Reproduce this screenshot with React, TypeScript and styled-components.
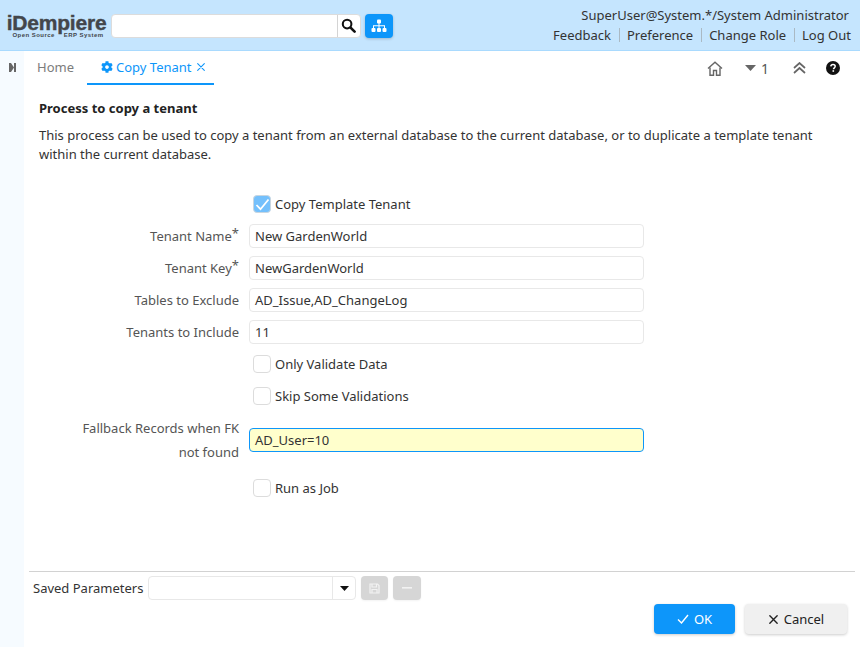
import React from "react";
import styled, { createGlobalStyle } from "styled-components";

const Global = createGlobalStyle`
  html, body { margin: 0; padding: 0; height: 100%; background: #fff; overflow: hidden; }
  body { font-family: "Noto Sans", sans-serif; font-size: 13px; color: #333; }
  #root { height: 647px; }
`;

const Page = styled.div`
  width: 860px; height: 647px; display: flex; flex-direction: column; overflow: hidden;
`;
const Header = styled.header`
  height: 50px; flex: none; background: #c5e5fe; border-bottom: 1px solid #a9dafe;
  display: flex; justify-content: space-between; padding: 0 9px 0 6px;
`;
const HeaderLeft = styled.div`
  display: flex; align-items: center; padding-top: 1px;
`;
const Logo = styled.div`
  width: 105px; padding-right: 4px; box-sizing: border-box; display: flex; flex-direction: column; align-items: center; color: #43464b;
`;
const LogoMain = styled.div`
  font: 900 21px/17px "Liberation Sans", sans-serif; letter-spacing: -0.2px; -webkit-text-stroke: 0.4px #43464b;
  white-space: nowrap;
`;
const LogoSub = styled.div`
  display: flex; gap: 9px; margin-top: 1px; padding-left: 3px;
  font: 700 6px/6px "Liberation Sans", sans-serif; letter-spacing: 0.45px; white-space: nowrap;
`;
const Search = styled.div`
  width: 250px; height: 24px; margin-right: 4px; background: #fff;
  border: 1px solid #dcdcdc; border-radius: 4px; box-sizing: border-box;
  display: flex; justify-content: flex-end; overflow: hidden;
`;
const SearchBtn = styled.div`
  width: 23px; border-left: 1px solid #d4d4d4; padding-right: 2px; box-sizing: border-box;
  display: flex; align-items: center; justify-content: center;
`;
const TreeBtn = styled.div`
  width: 28px; height: 24px; border-radius: 4px; background: #0d96fa; box-shadow: 0 1px 3px rgba(0,0,0,.2);
  display: flex; align-items: center; justify-content: center;
`;
const HeaderRight = styled.div`
  display: flex; flex-direction: column; align-items: flex-end; color: #333;
`;
const UserLine = styled.div`
  line-height: 18px; margin-top: 6px; padding-right: 2px;
`;
const LinkRow = styled.div`
  display: flex; align-items: center; margin-top: 4px; line-height: 18px;
`;
const HeaderLink = styled.span<{ $first?: boolean }>`
  ${p => !p.$first && "border-left: 1px solid #aab9c4; margin-left: 8px; padding-left: 7px;"}
  line-height: 14px;
`;
const Body = styled.div`
  flex: 1; display: flex; min-height: 0;
`;
const Side = styled.aside`
  width: 24px; flex: none; background: #f6fbff; padding-top: 12px; display: flex; justify-content: center;
  align-items: flex-start;
`;
const Main = styled.main`
  flex: 1; display: flex; flex-direction: column; min-width: 0;
`;
const TabBar = styled.div`
  height: 34px; flex: none; display: flex; justify-content: space-between; align-items: flex-start;
`;
const Tabs = styled.div`
  display: flex;
`;
const Tab = styled.div<{ $active?: boolean }>`
  height: 32px; display: flex; align-items: center; gap: 3px;
  padding: ${p => (p.$active ? "0 8px 0 14px" : "0 13px 0 13px")};
  color: ${p => (p.$active ? "#0d96fa" : "#7c7c7c")};
  border-bottom: 2px solid ${p => (p.$active ? "#0d96fa" : "transparent")};
  white-space: nowrap;
`;
const TabClose = styled.span`
  display: inline-flex; margin-left: 1px;
`;
const TabTools = styled.div`
  display: flex; align-items: center; height: 34px; padding-right: 6px;
`;
const ToolSlot = styled.div<{ $w: number }>`
  width: ${p => p.$w}px; display: flex; align-items: center; justify-content: center; gap: 5px;
  color: #555; font-size: 14px;
`;
const Content = styled.div`
  flex: 1; padding: 13px 0 0 15px; min-height: 0;
`;
const Title = styled.h1`
  margin: 0; font-size: 13px; line-height: 20px; font-weight: 700; color: #222;
`;
const Desc = styled.p`
  margin: 8px 0 0; line-height: 19px; width: 790px; color: #333;
`;
const Form = styled.div`
  margin-top: 24px; display: grid; grid-template-columns: 200px 395px; column-gap: 10px;
  grid-auto-rows: 32px; align-items: center;
`;
const Label = styled.label`
  text-align: right; color: #555; line-height: 24px;
`;
const Star = styled.sup`
  font-size: 13px; line-height: 0; vertical-align: 2px; position: relative; top: -1px;
`;
const FieldInput = styled.div<{ $focus?: boolean }>`
  height: 24px; box-sizing: border-box; padding: 0 5px; line-height: 22px; border-radius: 4px; color: #333;
  background: ${p => (p.$focus ? "#ffffcc" : "#fff")};
  border: 1px solid ${p => (p.$focus ? "#0d96fa" : "#e8e8e8")};
`;
const CheckCell = styled.div`
  grid-column: 2; display: flex; align-items: center; gap: 4px; padding-left: 4px; color: #333;
`;
const Box = styled.span<{ $on?: boolean }>`
  width: 18px; height: 18px; box-sizing: border-box; border-radius: 4px; flex: none;
  border: 1px solid ${p => (p.$on ? "#c9d6e0" : "#dcdcdc")};
  background: ${p => (p.$on ? "#74c0fc" : "#fff")};
  display: flex; align-items: center; justify-content: center;
`;
const TallLabel = styled(Label)`
  padding-left: 40px;
`;
const TallRow = styled.div`
  height: 48px; margin: 4px 0 8px; display: grid; grid-template-columns: 200px 395px; column-gap: 10px;
  align-items: center;
`;
const LastForm = styled(Form)`
  margin-top: 0;
`;
const Divider = styled.div`
  height: 1px; background: #d2d2d2; margin: 0 5px; flex: none;
`;
const Footer = styled.div`
  height: 75px; flex: none; padding-top: 4px; box-sizing: border-box;
`;
const SavedRow = styled.div`
  display: flex; align-items: center; padding-left: 9px; gap: 5px; height: 24px;
`;
const SavedCombo = styled.div`
  width: 208px; height: 24px; box-sizing: border-box; border: 1px solid #e8e8e8; border-radius: 4px;
  display: flex; justify-content: flex-end;
`;
const ComboBtn = styled.div`
  width: 23px; box-sizing: border-box; border-left: 1px solid #e8e8e8; display: flex; align-items: center; justify-content: center;
`;
const GreyBtn = styled.div<{ $w: number }>`
  width: ${p => p.$w}px; height: 24px; border-radius: 4px; background: #d6d6d6; display: flex; align-items: center;
  justify-content: center; box-shadow: 0 1px 2px rgba(0,0,0,.05);
`;
const Actions = styled.div`
  display: flex; justify-content: flex-end; gap: 10px; padding-right: 13px; margin-top: 4px;
`;
const Btn = styled.div<{ $primary?: boolean }>`
  height: 30px; width: ${p => (p.$primary ? 81 : 102)}px; border-radius: 4px; display: flex; align-items: center;
  justify-content: center; gap: 5px; box-shadow: 0 1px 3px rgba(0,0,0,.2);
  background: ${p => (p.$primary ? "#0d96fa" : "#f0f0f0")};
  color: ${p => (p.$primary ? "#fff" : "#222")};
`;

const Gear = () => (
  <svg width="12" height="12" viewBox="0 0 512 512" fill="#0d96fa">
    <path d="M487 315l-43-25c4-23 4-46 0-69l43-25c5-3 7-9 6-14-11-36-30-68-55-95-4-4-10-5-15-2l-43 25c-18-15-39-27-60-35V25c0-6-4-11-9-12-37-8-75-8-110 0-6 1-10 6-10 12v50c-21 8-42 20-60 35L88 85c-5-3-11-2-15 2-25 27-44 59-55 95-2 5 1 11 6 14l43 25c-4 23-4 46 0 69l-43 25c-5 3-8 9-6 14 11 36 30 68 55 95 4 4 10 5 15 2l43-25c18 15 39 27 60 35v50c0 6 4 11 10 12 37 8 75 8 110 0 5-1 9-6 9-12v-50c21-8 42-20 60-35l43 25c5 3 11 2 15-2 25-27 44-59 55-95 1-5-1-11-6-14zM256 336c-44 0-80-36-80-80s36-80 80-80 80 36 80 80-36 80-80 80z" />
  </svg>
);

const Cross = ({ size, color, w = 1.6 }: { size: number; color: string; w?: number }) => (
  <svg width={size} height={size} viewBox="0 0 12 12" fill="none" stroke={color} strokeWidth={w} strokeLinecap="round">
    <path d="M2 2l8 8M10 2l-8 8" />
  </svg>
);

const App = () => (
  <Page>
    <Global />
    <Header>
      <HeaderLeft>
        <Logo>
          <LogoMain>iDempiere</LogoMain>
          <LogoSub>
            <span>Open Source</span>
            <span>ERP System</span>
          </LogoSub>
        </Logo>
        <Search>
          <SearchBtn>
            <svg width="15" height="15" viewBox="0 0 16 16" fill="none" stroke="#111" strokeWidth="2.2" strokeLinecap="round">
              <circle cx="6.5" cy="6.5" r="4.6" />
              <path d="M10.2 10.2L14.5 14.5" strokeWidth="2.8" />
            </svg>
          </SearchBtn>
        </Search>
        <TreeBtn>
          <svg width="16" height="14" viewBox="0 0 16 14" fill="#fff">
            <rect x="6" y="0.5" width="4" height="4" rx="1" />
            <rect x="0.5" y="9" width="4" height="4" rx="1" />
            <rect x="6" y="9" width="4" height="4" rx="1" />
            <rect x="11.5" y="9" width="4" height="4" rx="1" />
            <path d="M7.5 4h1v2.2h5.500v3h-1V7.200H8.500v2h-1v-2H3v2H2v-3h5.500z" />
          </svg>
        </TreeBtn>
      </HeaderLeft>
      <HeaderRight>
        <UserLine>SuperUser@System.*/System Administrator</UserLine>
        <LinkRow>
          <HeaderLink $first>Feedback</HeaderLink>
          <HeaderLink>Preference</HeaderLink>
          <HeaderLink>Change Role</HeaderLink>
          <HeaderLink>Log Out</HeaderLink>
        </LinkRow>
      </HeaderRight>
    </Header>
    <Body>
      <Side>
        <svg width="7" height="9" viewBox="0 0 7 9" fill="#666">
          <path d="M0 0h2v9H0zM2 0l3 4.500L2 9zM5 0h2v9H5z" />
        </svg>
      </Side>
      <Main>
        <TabBar>
          <Tabs>
            <Tab>Home</Tab>
            <Tab $active>
              <Gear />
              Copy Tenant
              <TabClose>
                <Cross size={10} color="#0d96fa" w={1.3} />
              </TabClose>
            </Tab>
          </Tabs>
          <TabTools>
            <ToolSlot $w={26}>
              <svg width="16" height="15" viewBox="0 0 16 15" fill="none" stroke="#666" strokeWidth="1.400">
                <path d="M1 7.500L8 1.200l7 6.300" />
                <path d="M3 6.500v7.800h3.500V9.500h3v4.800H13V6.500" />
              </svg>
            </ToolSlot>
            <ToolSlot $w={58}>
              <svg width="11" height="6" viewBox="0 0 11 6" fill="#666">
                <path d="M0 0h11L5.500 6z" />
              </svg>
              1
            </ToolSlot>
            <ToolSlot $w={26}>
              <svg width="13" height="12" viewBox="0 0 13 12" fill="none" stroke="#666" strokeWidth="1.700">
                <path d="M1 6l5.500-5L12 6M1 11l5.500-5L12 11" />
              </svg>
            </ToolSlot>
            <ToolSlot $w={42}>
              <svg width="14" height="14" viewBox="0 0 14 14">
                <circle cx="7" cy="7" r="7" fill="#111" />
                <path d="M4.800 5.400C4.900 4.100 5.800 3.400 7 3.400c1.300 0 2.200.8 2.200 1.900 0 1.500-1.700 1.500-1.700 2.900" fill="none" stroke="#fff" strokeWidth="1.500" />
                <rect x="6.500" y="9.200" width="1.600" height="1.600" fill="#fff" />
              </svg>
            </ToolSlot>
          </TabTools>
        </TabBar>
        <Content>
          <Title>Process to copy a tenant</Title>
          <Desc>
            This process can be used to copy a tenant from an external database to the current database, or to duplicate a template tenant within the current database.
          </Desc>
          <Form>
            <CheckCell>
              <Box $on>
                <svg width="15" height="13" viewBox="0 0 15 13" fill="none" stroke="#fff" strokeWidth="1.800">
                  <path d="M1.500 7l4 4.200L13.500 1.500" />
                </svg>
              </Box>
              Copy Template Tenant
            </CheckCell>
            <Label>Tenant Name<Star>*</Star></Label>
            <FieldInput>New GardenWorld</FieldInput>
            <Label>Tenant Key<Star>*</Star></Label>
            <FieldInput>NewGardenWorld</FieldInput>
            <Label>Tables to Exclude</Label>
            <FieldInput>AD_Issue,AD_ChangeLog</FieldInput>
            <Label>Tenants to Include</Label>
            <FieldInput>11</FieldInput>
            <CheckCell><Box />Only Validate Data</CheckCell>
            <CheckCell><Box />Skip Some Validations</CheckCell>
          </Form>
          <TallRow>
            <TallLabel>Fallback Records when FK not found</TallLabel>
            <FieldInput $focus>AD_User=10</FieldInput>
          </TallRow>
          <LastForm>
            <CheckCell><Box />Run as Job</CheckCell>
          </LastForm>
        </Content>
        <Divider />
        <Footer>
          <SavedRow>
            Saved Parameters
            <SavedCombo>
              <ComboBtn>
                <svg width="9" height="5" viewBox="0 0 9 5" fill="#111">
                  <path d="M0 0h9L4.500 5z" />
                </svg>
              </ComboBtn>
            </SavedCombo>
            <GreyBtn $w={27}>
              <svg width="11" height="11" viewBox="0 0 11 11" fill="none" stroke="#f2f2f2" strokeWidth="1.200">
                <path d="M1 1h7.500L10 2.500V10H1z" />
                <path d="M3 1v3h4.500V1M3 10V6.500h5V10" />
              </svg>
            </GreyBtn>
            <GreyBtn $w={28}>
              <svg width="10" height="2" viewBox="0 0 10 2" fill="#f2f2f2">
                <rect width="10" height="1.600" />
              </svg>
            </GreyBtn>
          </SavedRow>
          <Actions>
            <Btn $primary>
              <svg width="12" height="10" viewBox="0 0 12 10" fill="none" stroke="#fff" strokeWidth="1.400">
                <path d="M1 5.500l3.500 3.500L11 1" />
              </svg>
              OK
            </Btn>
            <Btn>
              <Cross size={11} color="#222" w={1.5} />
              Cancel
            </Btn>
          </Actions>
        </Footer>
      </Main>
    </Body>
  </Page>
);

export default App;
